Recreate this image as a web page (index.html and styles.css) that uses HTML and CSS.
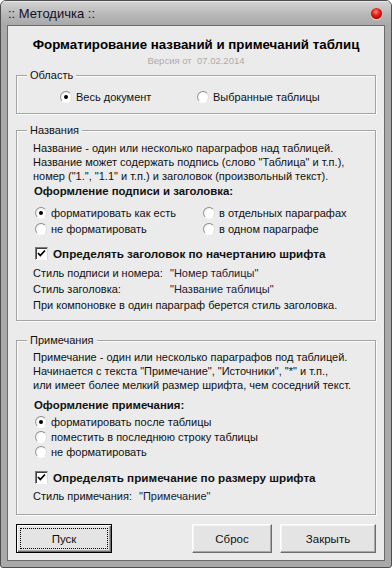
FILE: index.html
```html
<!DOCTYPE html>
<html lang="ru">
<head>
<meta charset="utf-8">
<title>Методичка</title>
<link rel="stylesheet" href="styles.css">
</head>
<body>
<div class="window">
  <div class="titlebar">
    <span class="title">:: Методичка ::</span>
    <span class="close"></span>
  </div>
  <div class="client">
    <div class="header">
      <div class="h1">Форматирование названий и примечаний таблиц</div>
      <div class="version">Версия от&nbsp; 07.02.2014</div>
    </div>

    <div class="group g1">
      <div class="legend">Область</div>
      <div class="scope">
        <label class="opt"><span class="radio on"></span>Весь документ</label>
        <label class="opt"><span class="radio"></span>Выбранные таблицы</label>
      </div>
    </div>

    <div class="group g2">
      <div class="legend">Названия</div>
      <div class="desc">Название - один или несколько параграфов над таблицей.<br>Название может содержать подпись (слово "Таблица" и т.п.),<br>номер ("1.", "1.1" и т.п.) и заголовок (произвольный текст).</div>
      <div class="sub">Оформление подписи и заголовка:</div>
      <div class="grid2">
        <label class="opt"><span class="radio on"></span>форматировать как есть</label>
        <label class="opt"><span class="radio"></span>в отдельных параграфах</label>
        <label class="opt"><span class="radio"></span>не форматировать</label>
        <label class="opt"><span class="radio"></span>в одном параграфе</label>
      </div>
      <label class="check"><span class="box"><svg width="11" height="11" viewBox="0 0 11 11"><path d="M2 5 L4.3 7.5 L9 2.5" fill="none" stroke="#000" stroke-width="1.8"/></svg></span>Определять заголовок по начертанию шрифта</label>
      <div class="styles">
        <div class="srow"><span class="lbl">Стиль подписи и номера:</span><span class="val">"Номер таблицы"</span></div>
        <div class="srow"><span class="lbl">Стиль заголовка:</span><span class="val">"Название таблицы"</span></div>
        <div class="srow">При компоновке в один параграф берется стиль заголовка.</div>
      </div>
    </div>

    <div class="group g3">
      <div class="legend">Примечания</div>
      <div class="desc">Примечание - один или несколько параграфов под таблицей.<br>Начинается с текста "Примечание", "Источники", "*" и т.п.,<br>или имеет более мелкий размер шрифта, чем соседний текст.</div>
      <div class="sub">Оформление примечания:</div>
      <div class="list">
        <label class="opt"><span class="radio on"></span>форматировать после таблицы</label>
        <label class="opt"><span class="radio"></span>поместить в последнюю строку таблицы</label>
        <label class="opt"><span class="radio"></span>не форматировать</label>
      </div>
      <label class="check"><span class="box"><svg width="11" height="11" viewBox="0 0 11 11"><path d="M2 5 L4.3 7.5 L9 2.5" fill="none" stroke="#000" stroke-width="1.8"/></svg></span>Определять примечание по размеру шрифта</label>
      <div class="styles">
        <div class="srow"><span class="lbl short">Стиль примечания:</span><span class="val">"Примечание"</span></div>
      </div>
    </div>

    <div class="buttons">
      <button class="btn default"><span class="focus">Пуск</span></button>
      <span class="spacer"></span>
      <button class="btn reset">Сброс</button>
      <button class="btn">Закрыть</button>
    </div>
  </div>
</div>
</body>
</html>
```
FILE: styles.css
```css
html, body {
  margin: 0;
  padding: 0;
  background: #ffffff;
}
body {
  font-family: "Liberation Sans", Arial, sans-serif;
  font-size: 11px;
  color: #111;
}
.window {
  width: 392px;
  height: 568px;
  box-sizing: border-box;
  border: 1px solid #4e4e4e;
  border-radius: 6px 6px 3px 3px;
  background: #a9a9a9;
  display: flex;
  flex-direction: column;
  overflow: hidden;
}
.titlebar {
  height: 24px;
  flex: none;
  display: flex;
  align-items: center;
  justify-content: space-between;
  padding: 0 9px 0 7px;
  background: linear-gradient(#d4d4d4, #b6b6b6 60%, #a9a9a9);
  box-shadow: inset 0 1px 0 #e6e6e6;
}
.title {
  font-size: 13px;
  color: #10102a;
  line-height: 16px;
  margin-top: 2px;
}
.close {
  width: 11px;
  height: 11px;
  border-radius: 50%;
  background: radial-gradient(circle at 45% 35%, #ff8a80 0, #e8281e 35%, #b10000 75%, #7a0000 100%);
  box-shadow: 0 1px 1px rgba(255,255,255,0.7);
  margin-top: 1px;
}
.client {
  flex: 1;
  margin: 0 6px 6px;
  border: 1px solid #6c6c6c;
  background: #ebebeb;
  padding: 0 8px;
  display: flex;
  flex-direction: column;
}
.header {
  padding-top: 11px;
  text-align: center;
}
.h1 {
  font-weight: bold;
  font-size: 13.3px;
  line-height: 16px;
  color: #000;
}
.version {
  margin-top: 2px;
  font-size: 9.5px;
  line-height: 12px;
  color: #ababab;
}
.group {
  border: 1px solid #a4a4a4;
  box-shadow: inset 1px 1px 0 #fbfbfb, 1px 1px 0 #fbfbfb;
  padding: 0 8px 0 16px;
}
.legend {
  width: fit-content;
  margin: -8px 0 0 -6px;
  padding: 0 3px;
  line-height: 14px;
  background: #ebebeb;
}
.g1 { margin-top: 8px; padding-bottom: 8px; }
.g2 { margin-top: 16px; padding-bottom: 7px; }
.g3 { margin-top: 19px; padding-bottom: 10px; }

.scope {
  margin-top: 7px;
  display: flex;
  height: 16px;
}
.scope .opt:first-child { margin-left: 27px; width: 137px; }

.opt {
  display: flex;
  align-items: center;
  height: 16px;
  white-space: nowrap;
}
.radio {
  width: 10px;
  height: 10px;
  border-radius: 50%;
  border: 1px solid;
  border-color: #8c8c8c #e0e0e0 #ffffff #9a9a9a;
  background: radial-gradient(circle at 60% 60%, #ffffff 45%, #e2e2e2 100%);
  margin-right: 4px;
  flex: none;
  position: relative;
}
.radio.on::after {
  content: "";
  position: absolute;
  left: 3px;
  top: 3px;
  width: 4px;
  height: 4px;
  border-radius: 50%;
  background: #000;
}

.desc {
  margin-top: 4px;
  line-height: 14px;
  white-space: nowrap;
}
.g3 .desc { margin-top: 3px; }
.sub {
  font-weight: bold;
  font-size: 11.4px;
  line-height: 14px;
  margin-left: 1px;
  margin-top: 1px;
}
.g3 .sub { margin-top: 6px; }

.grid2 {
  margin-top: 7px;
  margin-left: 2px;
  display: grid;
  grid-template-columns: 168px auto;
}
.list {
  margin-top: 2px;
  margin-left: 2px;
}
.list .opt { height: 15px; }

.check {
  display: flex;
  align-items: center;
  height: 16px;
  margin-top: 8px;
  margin-left: 2px;
  font-weight: bold;
  font-size: 11.7px;
  white-space: nowrap;
}
.g3 .check { margin-top: 10px; }
.box {
  width: 11px;
  height: 11px;
  border: 1px solid;
  border-color: #7a7a7a #d8d8d8 #ffffff #7a7a7a;
  box-shadow: inset 1px 1px 0 #404040;
  background: #fff;
  margin-right: 5px;
  display: flex;
  flex: none;
}
.box svg { display: block; }

.styles { margin-top: 4px; }
.g3 .styles { margin-top: 3px; }
.srow {
  display: flex;
  line-height: 16px;
  white-space: nowrap;
}
.lbl { width: 137px; flex: none; }
.lbl.short { width: 106px; }
.val { color: #1a1a3a; }

.buttons {
  margin-top: 9px;
  display: flex;
  gap: 8px;
}
.spacer { flex: 1; }
.btn {
  height: 29px;
  width: 96px;
  font-family: "Liberation Sans", Arial, sans-serif;
  font-size: 11.5px;
  color: #111;
  background: #e4e4e4;
  border: 1px solid;
  border-color: #ffffff #6d6d6d #6d6d6d #ffffff;
  box-shadow: inset -1px -1px 0 #a8a8a8, inset 1px 1px 0 #f4f4f4;
  padding: 0;
  display: flex;
  align-items: center;
  justify-content: center;
}
.btn.reset { width: 80px; }
.btn.default {
  border: 1px solid #000;
  box-shadow: inset 1px 1px 0 #fff, inset -1px -1px 0 #6d6d6d, inset -2px -2px 0 #a8a8a8;
  padding: 3px;
}
.focus {
  flex: 1;
  align-self: stretch;
  display: flex;
  align-items: center;
  justify-content: center;
  border: 1px dotted #000;
}
```
